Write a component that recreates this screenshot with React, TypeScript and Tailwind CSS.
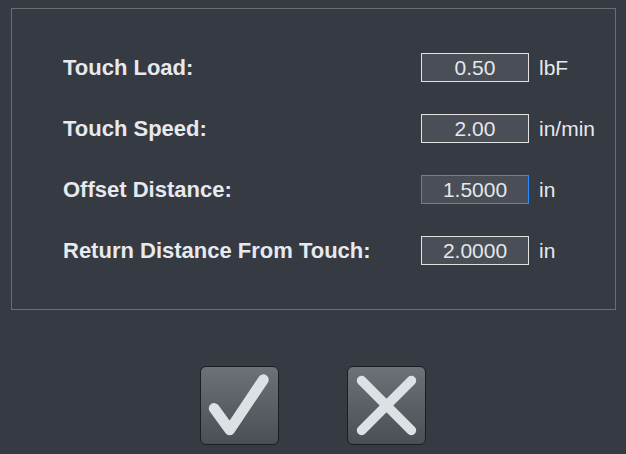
import React from "react";

type Field = {
  label: string;
  value: string;
  unit: string;
  focused?: boolean;
};

const fields: Field[] = [
  { label: "Touch Load:", value: "0.50", unit: "lbF" },
  { label: "Touch Speed:", value: "2.00", unit: "in/min" },
  { label: "Offset Distance:", value: "1.5000", unit: "in", focused: true },
  { label: "Return Distance From Touch:", value: "2.0000", unit: "in" },
];

function FieldRow({ field }: { field: Field }) {
  return (
    <div className="flex items-center h-[29px]">
      <div className="w-[358px] text-[22px] font-bold text-[#e6e9ee] leading-none">
        {field.label}
      </div>
      <div
        className={
          field.focused
            ? "w-[108px] h-[29px] bg-[#4a4e56] border border-solid border-[#2a8cff] flex items-center justify-center text-[21px] text-[#e4e7eb] leading-none"
            : "w-[108px] h-[29px] bg-[#4a4e56] border border-solid border-[#e2e2e2] flex items-center justify-center text-[21px] text-[#e4e7eb] leading-none"
        }
      >
        {field.value}
      </div>
      <div className="ml-[10px] text-[21px] text-[#e6e9ee] leading-none">{field.unit}</div>
    </div>
  );
}

function IconButton({ children }: { children: React.ReactNode }) {
  return (
    <button className="w-[79px] h-[79px] rounded-[6px] border border-[#1c1d20] bg-gradient-to-b from-[#6d7279] to-[#4a4e55] flex items-center justify-center">
      {children}
    </button>
  );
}

export default function App() {
  return (
    <div
      className="w-[626px] h-[454px] bg-[#363a42] overflow-hidden pt-[8px]"
      style={{ fontFamily: '"Liberation Sans", Arial, sans-serif' }}
    >
      <div className="ml-[11px] w-[605px] h-[302px] border border-[#6c6d70] pt-[44px] pl-[51px] flex flex-col gap-[32px]">
        {fields.map((f) => (
          <FieldRow key={f.label} field={f} />
        ))}
      </div>

      <div className="mt-[56px] flex justify-center gap-[68px]">
        <IconButton>
          <svg width="79" height="79" viewBox="0 0 79 79">
            <polyline
              points="13.5,42.5 29.5,64.5 64,13"
              fill="none"
              stroke="#dde0e4"
              strokeWidth="11"
              strokeLinecap="round"
              strokeLinejoin="round"
            />
          </svg>
        </IconButton>
        <IconButton>
          <svg width="79" height="79" viewBox="0 0 79 79">
            <path
              d="M14 14 L65 65 M65 14 L14 65"
              fill="none"
              stroke="#dde0e4"
              strokeWidth="10"
              strokeLinecap="round"
            />
          </svg>
        </IconButton>
      </div>
    </div>
  );
}
